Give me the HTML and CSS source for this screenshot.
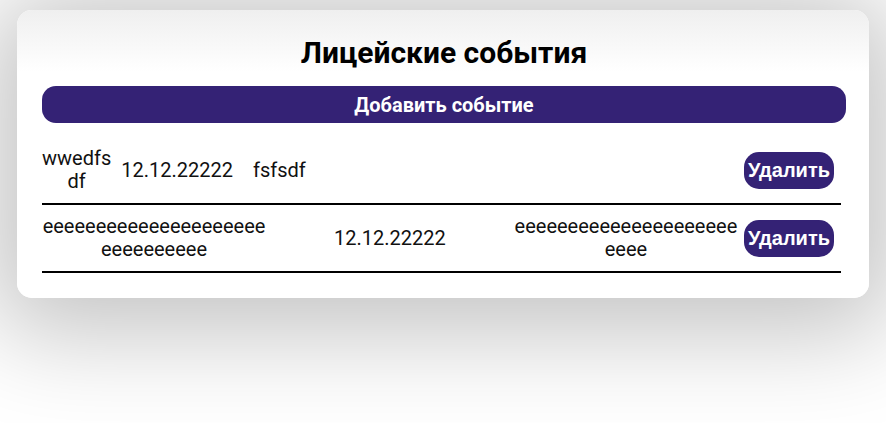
FILE: index.html
```html
<!DOCTYPE html>
<html lang="ru">
<head>
<meta charset="utf-8">
<title>Лицейские события</title>
<link rel="stylesheet" href="styles.css">
</head>
<body>
<main class="card">
  <h1 class="title">Лицейские события</h1>
  <button class="add-btn">Добавить событие</button>
  <div class="events">
    <div class="event event--compact">
      <span class="cell cell--name">wwedfs df</span>
      <span class="cell cell--date">12.12.22222</span>
      <span class="cell cell--desc">fsfsdf</span>
      <button class="del-btn">Удалить</button>
    </div>
    <div class="event">
      <span class="cell">eeeeeeeeeeeeeeeeeeeee eeeeeeeeee</span>
      <span class="cell">12.12.22222</span>
      <span class="cell">eeeeeeeeeeeeeeeeeeeee eeee</span>
      <button class="del-btn">Удалить</button>
    </div>
  </div>
</main>
</body>
</html>
```

FILE: styles.css
```css
* { box-sizing: border-box; }

html, body {
  margin: 0;
  background: #fff;
  font-family: Roboto, "Noto Sans", sans-serif;
  color: #111;
}

body {
  min-height: 423px;
  padding: 10px 17px 0 17px;
  overflow: hidden;
}

.card {
  width: 852px;
  background: linear-gradient(#efefef 0px, #ffffff 62px);
  border-radius: 15px;
  box-shadow: 0 10px 100px 25px rgba(0, 0, 0, 0.24);
  padding: 25px 23px 25px 25px;
  display: flex;
  flex-direction: column;
}

.title {
  margin: 0;
  text-align: center;
  font-size: 30px;
  font-weight: 700;
  line-height: 35px;
  color: #000;
}

.add-btn {
  margin-top: 16px;
  height: 37px;
  border: none;
  border-radius: 14px;
  background: #342275;
  color: #fff;
  font-family: Roboto, sans-serif;
  font-weight: 700;
  font-size: 20px;
  cursor: pointer;
}

.events {
  margin-top: 14px;
  margin-right: 5px;
  display: flex;
  flex-direction: column;
}

.event {
  display: flex;
  align-items: center;
  padding: 10px 7px 10px 0;
  border-bottom: 2px solid #000;
  font-size: 20px;
  line-height: 23px;
}

.cell {
  flex: 1 1 0;
  text-align: center;
}

.event:not(.event--compact) .cell:first-child {
  margin-left: -6px;
}

.event--compact .cell {
  flex: none;
}

.event--compact .cell--name {
  width: min-content;
}

.event--compact .cell--date {
  margin-left: 10px;
}

.event--compact .cell--desc {
  margin-left: 20px;
}

.event--compact .del-btn {
  margin-left: auto;
}

.del-btn {
  flex: none;
  height: 37px;
  padding: 0 4px;
  border: none;
  border-radius: 15px;
  background: #342275;
  color: #fff;
  font-family: "Liberation Sans", Arial, sans-serif;
  font-weight: 700;
  font-size: 20px;
  cursor: pointer;
}
```
